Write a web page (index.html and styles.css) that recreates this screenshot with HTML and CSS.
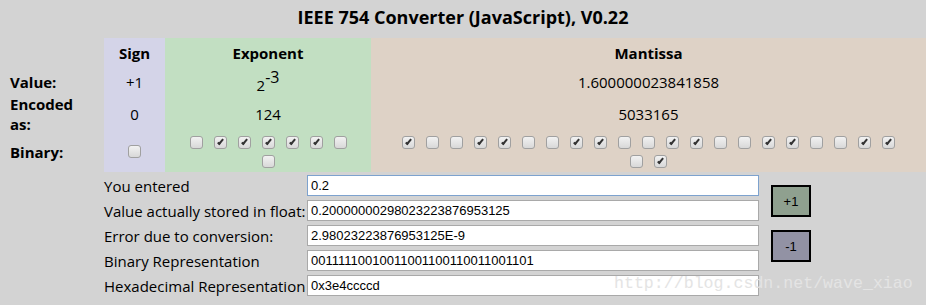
FILE: index.html
```html
<!doctype html>
<html>
  <head>
    <meta charset="UTF-8" />
    <title>IEEE 754 Converter</title>
    <link rel="stylesheet" href="styles.css">
  </head>

  <body>
    <h1 class="title">IEEE 754 Converter (JavaScript), V0.22</h1>

    <div class="bits">
      <div class="cell label"></div>
      <div class="cell sign head">Sign</div>
      <div class="cell exponent head">Exponent</div>
      <div class="cell mantissa head">Mantissa</div>

      <div class="cell label">Value:</div>
      <div class="cell sign">+1</div>
      <div class="cell exponent"><span class="power">2<sup>-3</sup></span></div>
      <div class="cell mantissa">1.600000023841858</div>

      <div class="cell label">Encoded as:</div>
      <div class="cell sign">0</div>
      <div class="cell exponent">124</div>
      <div class="cell mantissa">5033165</div>

      <div class="cell label">Binary:</div>
      <div class="cell sign boxes" id="sign-bits"></div>
      <div class="cell exponent boxes" id="exponent-bits"></div>
      <div class="cell mantissa boxes" id="mantissa-bits"></div>
    </div>

    <div class="converter">
      <div class="fields">
        <label>You entered</label>
        <input type="text" class="focused" value="0.2" />
        <label>Value actually stored in float:</label>
        <input type="text" value="0.20000000298023223876953125" />
        <label>Error due to conversion:</label>
        <input type="text" value="2.98023223876953125E-9" />
        <label>Binary Representation</label>
        <input type="text" value="00111110010011001100110011001101" />
        <label>Hexadecimal Representation</label>
        <input type="text" value="0x3e4ccccd" />
      </div>
      <div class="buttons">
        <button class="plus">+1</button>
        <button class="minus">-1</button>
      </div>
    </div>

    <div class="watermark">http://blog.csdn.net/wave_xiao</div>

    <script>
      // 0.2f = 0 01111100 10011001100110011001101
      const bits = "00111110010011001100110011001101";

      function fill(id, part) {
        const box = document.getElementById(id);
        for (const b of part) {
          const input = document.createElement("input");
          input.type = "checkbox";
          input.checked = b === "1";
          box.appendChild(input);
        }
      }

      fill("sign-bits", bits.slice(0, 1));
      fill("exponent-bits", bits.slice(1, 9));
      fill("mantissa-bits", bits.slice(9));
    </script>
  </body>
</html>
```

FILE: styles.css
```css
*,
*::before,
*::after {
  box-sizing: border-box;
}

body {
  margin: 0;
  background-color: #d3d3d3;
  color: #000;
  font-family: "Open Sans", sans-serif;
  font-size: 15px;
  position: relative;
  height: 305px;
  overflow: hidden;
}

.title {
  margin: 0;
  padding-top: 5px;
  height: 38px;
  text-align: center;
  font-size: 18px;
  font-weight: bold;
}

.bits {
  display: grid;
  grid-template-columns: 104px 61px 206px 1fr;
  grid-template-rows: 30px 28px 35px 41px;
}

.cell {
  display: flex;
  align-items: center;
  justify-content: center;
  text-align: center;
}

.label {
  justify-content: flex-start;
  text-align: left;
  padding: 0 20px 0 10px;
  font-weight: bold;
  line-height: 20px;
}

.head {
  font-weight: bold;
}

.sign {
  background-color: #d4d4e8;
}

.exponent {
  background-color: #c2dfc2;
}

.mantissa {
  background-color: #ded2c6;
}

.power {
  position: relative;
  top: 3px;
}

.power sup {
  font-size: 16px;
  line-height: 0;
  vertical-align: 8px;
}

.boxes {
  flex-wrap: wrap;
  align-content: center;
  column-gap: 11px;
  row-gap: 6px;
  padding: 0 22px;
}

input[type="checkbox"] {
  appearance: none;
  margin: 0;
  width: 13px;
  height: 13px;
  border: 1px solid #a0a0a0;
  border-radius: 3px;
  background-image: linear-gradient(#f2f2f2, #d8d8d8);
  position: relative;
}

input[type="checkbox"]:checked::after {
  content: "";
  position: absolute;
  left: 4px;
  top: 1px;
  width: 3px;
  height: 7px;
  border: solid #333;
  border-width: 0 2px 2px 0;
  transform: rotate(40deg);
}

.converter {
  display: flex;
  align-items: flex-start;
  padding: 3px 0 0 104px;
}

.fields {
  display: grid;
  grid-template-columns: 203px 452px;
  grid-auto-rows: 21px;
  row-gap: 4px;
}

.fields label {
  display: flex;
  align-items: center;
  white-space: nowrap;
}

.fields input {
  height: 21px;
  margin: 0;
  padding: 0 3px;
  border: 1px solid #a9a9a9;
  background-color: #fff;
  font-family: "Liberation Sans", Arial, sans-serif;
  font-size: 13px;
  color: #000;
  outline: none;
}

.fields input.focused {
  border-color: #7da2ce;
}

.buttons {
  display: flex;
  flex-direction: column;
  gap: 13px;
  padding: 10px 0 0 12px;
}

.buttons button {
  width: 40px;
  height: 32px;
  border: 2px solid #000;
  font-family: "Liberation Sans", Arial, sans-serif;
  font-size: 13px;
  color: #000;
  padding: 0;
}

.plus {
  background-color: #8fa08f;
}

.minus {
  background-color: #9292a4;
}

.watermark {
  position: absolute;
  left: 614px;
  top: 274px;
  font-family: "Liberation Mono", monospace;
  font-size: 16.6px;
  color: #e4e4e4;
  pointer-events: none;
}
```
